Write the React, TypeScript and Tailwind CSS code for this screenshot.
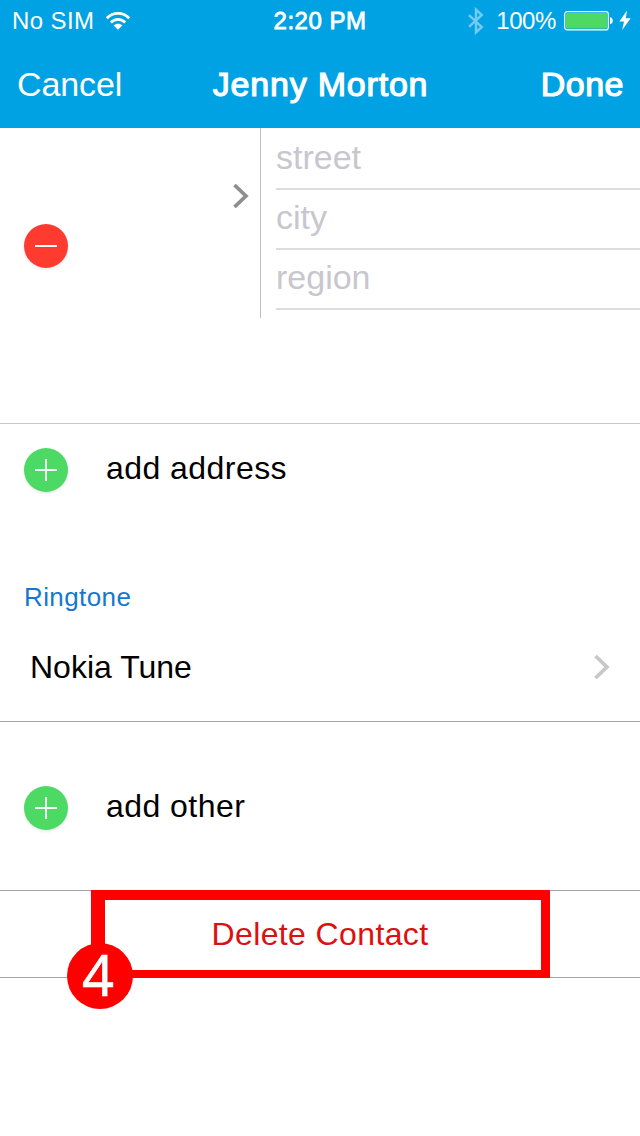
import * as React from 'react';

type RoundIconProps = {
  kind: 'add' | 'remove';
};

function RoundIcon({ kind }: RoundIconProps) {
  const color = kind === 'add' ? 'bg-[#4cd964]' : 'bg-[#ff3b30]';
  return (
    <span className={`block size-11 shrink-0 rounded-full shadow-[0_2px_3px_rgba(0,0,0,0.07)] ${color}`}>
      <svg viewBox="0 0 44 44" className="size-11" fill="none" stroke="#f3fff3" strokeWidth="2">
        <path d="M11 22H33" />
        {kind === 'add' ? <path d="M22 11V33" /> : null}
      </svg>
    </span>
  );
}

function Chevron({ className }: { className: string }) {
  return (
    <svg viewBox="0 0 16 26" className={`h-[26px] w-4 ${className}`} fill="none" stroke="currentColor" strokeWidth="3.8">
      <path d="M1.5 2L12.9 13L1.5 24" />
    </svg>
  );
}

function WifiIcon() {
  return (
    <svg viewBox="0 0 26 20" className="h-5 w-[26px]" fill="none" stroke="white" strokeWidth="2.8">
      <path d="M1.8 7.2C8 0.8 18 0.8 24.2 7.2" />
      <path d="M5.8 11.6C10 7.4 16 7.4 20.2 11.6" />
      <path d="M13 18.8L8.6 14.4C11 12.2 15 12.2 17.4 14.4Z" fill="white" stroke="none" />
    </svg>
  );
}

function StatusBar() {
  return (
    <div className="grid h-[41px] grid-cols-3 items-center text-[24px] leading-[41px]">
      <div className="flex items-center gap-[11px] pl-3">
        <span className="tracking-[0.4px]">No SIM</span>
        <WifiIcon />
      </div>
      <span className="text-center tracking-[0.5px] [-webkit-text-stroke:0.8px_white]">2:20 PM</span>
      <div className="flex items-center justify-end pr-[9px]">
        <svg viewBox="0 0 16 28" className="mr-3 h-7 w-4 text-[#75caf1]" fill="none" stroke="currentColor" strokeWidth="2.4">
          <path d="M1 8.2L13.8 20L8 25.4V2.6L13.8 8L1 19.8" />
        </svg>
        <span className="mr-2 tracking-[-0.4px]">100%</span>
        <svg viewBox="0 0 49 20" className="mr-[6px] h-5 w-[49px]">
          <rect x="0.7" y="0.7" width="43.6" height="18.2" rx="2.5" fill="none" stroke="white" strokeWidth="1.2" />
          <rect x="2" y="2" width="41" height="15.6" rx="1.2" fill="#4cd964" />
          <path d="M46 6.3C49.7 6.5 49.7 13 46 13.2Z" fill="white" />
        </svg>
        <svg viewBox="0 0 12 20" className="h-5 w-3" fill="white">
          <path d="M8 -0.5L0.3 10.5H5L3.2 19L11.7 7.3H6.8Z" />
        </svg>
      </div>
    </div>
  );
}

function AddressFields() {
  const fields = ['street', 'city', 'region'];
  return (
    <section className="flex h-[296px] items-start border-b border-[#c8c7cc]">
      <div className="flex h-[190px] w-[261px] items-start justify-between border-r border-[#c0c0c4] pl-6">
        <div className="pt-24">
          <RoundIcon kind="remove" />
        </div>
        <div className="pt-[55px] pr-[11px]">
          <Chevron className="text-[#8e8e8e]" />
        </div>
      </div>
      <div className="flex-1 pt-0.5 pl-[15px] text-[34px] text-[#c7c7cd]">
        {fields.map((field) => (
          <div key={field} className="h-15 border-b-2 border-[#dcdcde] leading-[54px]">
            {field}
          </div>
        ))}
      </div>
    </section>
  );
}

function AddRow({ label }: { label: string }) {
  return (
    <div className="flex items-center">
      <div className="pt-1 pl-6">
        <RoundIcon kind="add" />
      </div>
      <span className="pl-[38px] text-[32px] leading-[44px] tracking-[0.45px]">{label}</span>
    </div>
  );
}

export default function App() {
  return (
    <main className="h-[1136px] w-[640px] overflow-hidden bg-white font-['Liberation_Sans',Arial,sans-serif] text-black">
      <header className="h-32 bg-[#00a2e3] text-white">
        <StatusBar />
        <nav className="grid h-[87px] grid-cols-[1fr_auto_1fr] items-center pr-4 pl-[17px] text-[34px]">
          <span className="tracking-[-0.1px]">Cancel</span>
          <h1 className="tracking-[0.8px] [-webkit-text-stroke:1.2px_white]">Jenny Morton</h1>
          <span className="text-right tracking-[0.5px] [-webkit-text-stroke:1.2px_white]">Done</span>
        </nav>
      </header>

      <AddressFields />

      <section className="flex h-[88px] flex-col justify-center">
        <AddRow label="add address" />
      </section>

      <section className="h-[210px] border-b border-[#a3a3a6] pt-[65px]">
        <h2 className="pl-6 text-[26px] leading-10 tracking-[0.4px] text-[#1478d2]">Ringtone</h2>
        <div className="flex h-[100px] items-center justify-between px-[30px] text-[32px]">
          <span>Nokia Tune</span>
          <Chevron className="text-[#c7c7cc]" />
        </div>
      </section>

      <section className="flex h-[169px] flex-col justify-center border-b border-[#a3a3a6]">
        <AddRow label="add other" />
      </section>

      <section className="relative flex h-[87px] items-center justify-center border-b border-[#a3a3a6]">
        <span className="text-[32px] tracking-[0.38px] text-[#dc1010]">Delete Contact</span>
        <div className="absolute -top-px left-[91px] h-[88px] w-[459px] border-t-10 border-r-9 border-b-8 border-l-14 border-[#ff0000]" />
        <div className="absolute top-[52px] left-[67px] flex size-[66px] items-center justify-center rounded-full bg-[#ff0000] text-[56px] leading-[66px] text-white">
          <span className="mr-1 -mt-1 font-['Noto_Sans',sans-serif] [-webkit-text-stroke:0.5px_white]">4</span>
        </div>
      </section>
    </main>
  );
}
